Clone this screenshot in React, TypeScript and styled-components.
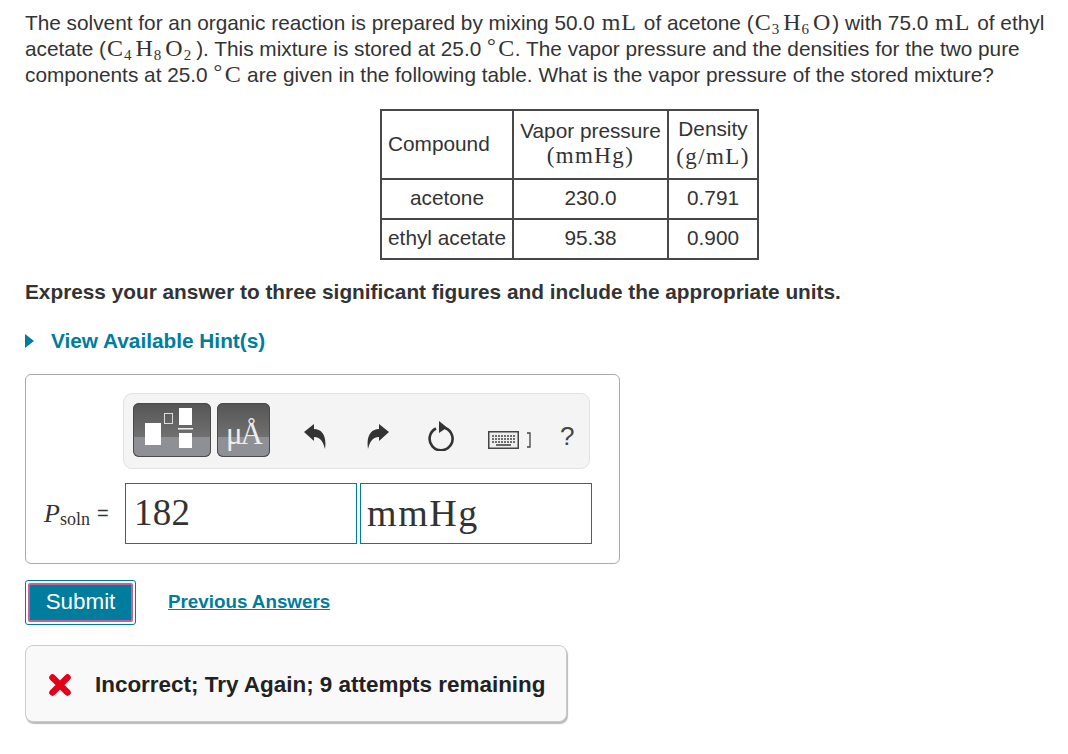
import React from 'react'
import styled, { createGlobalStyle } from 'styled-components'

const GlobalStyle = createGlobalStyle`
  html, body {
    margin: 0;
    padding: 0;
    background: #fff;
  }
  body {
    font-family: "Liberation Sans", Arial, sans-serif;
    color: #333;
  }
`

const App: React.FC = () => {
  return (
    <Page>
      <GlobalStyle />
      <Question>
        The solvent for an organic reaction is prepared by mixing 50.0 <Mt>mL</Mt> of acetone (
        <Mt>C<sub>3</sub>H<sub>6</sub>O</Mt>) with 75.0 <Mt>mL</Mt> of ethyl
        <br />
        acetate (<Mt>C<sub>4</sub>H<sub>8</sub>O<sub>2</sub></Mt>). This mixture is stored at 25.0 <Mt $deg><sup>°</sup>C</Mt>. The vapor pressure and the densities for the two pure
        <br />
        components at 25.0 <Mt $deg><sup>°</sup>C</Mt> are given in the following table. What is the vapor pressure of the stored mixture?
      </Question>

      <TableWrap>
        <DataTable>
          <tbody>
            <HeadRow>
              <Cell $w={132} $left>Compound</Cell>
              <Cell $w={155} $lh={25}>Vapor pressure<br /><TableMt>(mmHg)</TableMt></Cell>
              <Cell $w={90} $lh={28}>Density<br /><TableMt>(g/mL)</TableMt></Cell>
            </HeadRow>
            <BodyRow>
              <Cell>acetone</Cell>
              <Cell>230.0</Cell>
              <Cell>0.791</Cell>
            </BodyRow>
            <BodyRow>
              <Cell>ethyl acetate</Cell>
              <Cell>95.38</Cell>
              <Cell>0.900</Cell>
            </BodyRow>
          </tbody>
        </DataTable>
      </TableWrap>

      <Instruction>Express your answer to three significant figures and include the appropriate units.</Instruction>

      <HintRow>
        <svg width="10" height="16" viewBox="0 0 10 16"><path d="M0 1 L9 8 L0 15 Z" fill="#007c9c" /></svg>
        <HintLink>View Available Hint(s)</HintLink>
      </HintRow>

      <AnswerBox>
        <Toolbar>
          <TemplateButton $w={78}>
            <svg width="78" height="54" viewBox="0 0 78 54">
              <rect x="12" y="20" width="16" height="22" fill="#fff" />
              <rect x="31.5" y="10.5" width="8" height="10" fill="none" stroke="#ddd" strokeWidth="1" />
              <rect x="46" y="5" width="13" height="17" fill="#fff" />
              <rect x="45" y="25" width="15" height="1.5" fill="#eee" />
              <rect x="46" y="30" width="13" height="15" fill="#fff" />
            </svg>
          </TemplateButton>
          <TemplateButton $w={53}>
            <UnitGlyph>μÅ</UnitGlyph>
          </TemplateButton>
          <ToolIcon $gap={28} $drop={12}>
            <svg width="22" height="26" viewBox="0 0 22 26">
              <path d="M0 8 L10 0 L10 5 C18 5 23 12 21 25 C19 17 16 13 10 13 L10 17 Z" fill="#333" />
            </svg>
          </ToolIcon>
          <ToolIcon $gap={41} $drop={12}>
            <svg width="22" height="26" viewBox="0 0 22 26">
              <path d="M22 8 L12 0 L12 5 C4 5 -1 12 1 25 C3 17 6 13 12 13 L12 17 Z" fill="#333" />
            </svg>
          </ToolIcon>
          <ToolIcon $gap={39} $drop={10}>
            <svg width="26" height="30" viewBox="0 0 26 30">
              <path d="M8 7.5 A11.5 11.5 0 1 0 17 7" fill="none" stroke="#333" strokeWidth="2.6" />
              <path d="M11 0 L19 6.5 L11 12 Z" fill="#333" />
            </svg>
          </ToolIcon>
          <ToolIcon $gap={34} $drop={18}>
            <svg width="31" height="18" viewBox="0 0 31 18">
              <rect x="0.75" y="0.75" width="29.5" height="16.5" fill="#eee" stroke="#444" strokeWidth="1.5" />
              <path d="M4 5 H27 M4 8 H27 M4 11 H27" stroke="#444" strokeWidth="1.6" strokeDasharray="2 1" />
              <path d="M8 14 H23" stroke="#444" strokeWidth="1.6" />
            </svg>
          </ToolIcon>
          <ToolIcon $gap={8} $drop={18}>
            <svg width="4" height="16" viewBox="0 0 4 16"><path d="M0 1 H3 V15 H0" fill="none" stroke="#444" strokeWidth="1.3" /></svg>
          </ToolIcon>
          <HelpMark>?</HelpMark>
        </Toolbar>

        <AnswerRow>
          <AnswerLabel><i>P</i><sub>soln</sub></AnswerLabel>
          <Equals>=</Equals>
          <AnswerField>182</AnswerField>
          <AnswerField $units>mmHg</AnswerField>
        </AnswerRow>
      </AnswerBox>

      <ActionRow>
        <SubmitOuter>
          <SubmitButton>Submit</SubmitButton>
        </SubmitOuter>
        <PreviousLink>Previous Answers</PreviousLink>
      </ActionRow>

      <Feedback>
        <svg width="22" height="22" viewBox="0 0 22 22">
          <path d="M3.5 3.5 L18.5 18.5 M18.5 3.5 L3.5 18.5" fill="none" stroke="#e2001a" strokeWidth="6.5" strokeLinecap="round" />
        </svg>
        <FeedbackText>Incorrect; Try Again; 9 attempts remaining</FeedbackText>
      </Feedback>
    </Page>
  )
}

export default App

const Page = styled.div`
  width: 1068px;
  height: 754px;
  box-sizing: border-box;
  padding: 10px 0 0 25px;
  overflow: hidden;
`

const Question = styled.div`
  font-size: 20.8px;
  line-height: 26px;
  color: #333;
  white-space: nowrap;
`

const Mt = styled.span<{ $deg?: boolean }>`
  font-family: "Liberation Serif", "Times New Roman", serif;
  font-size: 24px;
  letter-spacing: ${(p) => (p.$deg ? '0.5px' : '1px')};
  padding: ${(p) => (p.$deg ? '0' : '0 1px')};
  line-height: 0;

  sub {
    font-size: 15px;
    line-height: 0;
    vertical-align: -4px;
    margin-right: 3px;
  }
  sup {
    font-size: 22px;
    line-height: 0;
    vertical-align: 3px;
    margin-right: 2px;
  }
`

const TableMt = styled.span`
  font-family: "Liberation Serif", "Times New Roman", serif;
  font-size: 23px;
  letter-spacing: 1.4px;
`

const TableWrap = styled.div`
  display: flex;
  margin: 21px 0 0 355px;
`

const DataTable = styled.table`
  border-collapse: collapse;
  table-layout: fixed;
  width: 378px;
  font-size: 20.8px;
  color: #333;
`

const HeadRow = styled.tr`
  height: 69px;
`

const BodyRow = styled.tr`
  height: 40px;
`

const Cell = styled.td<{ $w?: number; $left?: boolean; $lh?: number }>`
  border: 2px solid #484848;
  padding: 0 2px ${(p) => (p.$lh ? '4px' : '2px')};
  text-align: ${(p) => (p.$left ? 'left' : 'center')};
  padding-left: ${(p) => (p.$left ? '6px' : '2px')};
  width: ${(p) => (p.$w ? `${p.$w}px` : 'auto')};
  line-height: ${(p) => (p.$lh ? `${p.$lh}px` : 'normal')};
  box-sizing: border-box;
  white-space: nowrap;
`

const Instruction = styled.div`
  margin-top: 19px;
  font-size: 20.8px;
  line-height: 26px;
  font-weight: 700;
  color: #333;
`

const HintRow = styled.div`
  display: flex;
  align-items: center;
  gap: 16px;
  margin-top: 23px;
  height: 26px;
`

const HintLink = styled.span`
  font-size: 20.8px;
  font-weight: 700;
  color: #007c9c;
`

const AnswerBox = styled.div`
  box-sizing: border-box;
  width: 595px;
  height: 190px;
  margin-top: 20px;
  border: 1px solid #aaa;
  border-radius: 6px;
  padding: 18px 0 0 18px;
`

const Toolbar = styled.div`
  box-sizing: border-box;
  display: flex;
  align-items: center;
  width: 467px;
  margin-left: 79px;
  height: 76px;
  padding-left: 9px;
  background: #f4f4f4;
  border: 1px solid #e2e2e2;
  border-radius: 9px;
`

const TemplateButton = styled.div<{ $w: number }>`
  box-sizing: border-box;
  display: flex;
  flex-shrink: 0;
  align-items: center;
  justify-content: center;
  width: ${(p) => p.$w}px;
  height: 54px;
  margin: 0 6px 2px 0;
  border-radius: 6px;
  background: linear-gradient(#555 0%, #707070 63%, #8f8f96 63%, #8f8f96 100%);
  box-shadow: inset 0 0 0 1px #4a4a4a;
  overflow: hidden;
`

const UnitGlyph = styled.span`
  font-family: "Liberation Serif", "Times New Roman", serif;
  font-size: 31px;
  letter-spacing: -2px;
  color: #eee;
  line-height: 1;
  margin-top: 6px;
`

const ToolIcon = styled.div<{ $gap: number; $drop: number }>`
  display: flex;
  flex-shrink: 0;
  align-items: center;
  margin-left: ${(p) => p.$gap}px;
  margin-top: ${(p) => p.$drop}px;
`

const HelpMark = styled.span`
  margin: 10px 0 0 29px;
  font-size: 26px;
  color: #444;
  line-height: 1;
`

const AnswerRow = styled.div`
  display: flex;
  align-items: center;
  margin-top: 14px;
`

const AnswerLabel = styled.span`
  font-family: "Liberation Serif", "Times New Roman", serif;
  font-size: 26px;
  color: #333;
  width: 53px;

  sub {
    font-size: 18px;
    line-height: 0;
    vertical-align: -3px;
  }
`

const Equals = styled.span`
  width: 28px;
  font-size: 20px;
  color: #333;
`

const AnswerField = styled.div<{ $units?: boolean }>`
  box-sizing: border-box;
  width: 232px;
  height: 61px;
  margin-left: ${(p) => (p.$units ? '3px' : '0')};
  padding-left: ${(p) => (p.$units ? '6px' : '8px')};
  border: 1px solid #007c9c;
  font-family: "Liberation Serif", "Times New Roman", serif;
  font-size: ${(p) => (p.$units ? '38px' : '37px')};
  letter-spacing: ${(p) => (p.$units ? '1.6px' : '0.3px')};
  line-height: 58px;
  color: #333;
`

const ActionRow = styled.div`
  display: flex;
  align-items: center;
  margin-top: 16px;
`

const SubmitOuter = styled.div`
  box-sizing: border-box;
  width: 111px;
  height: 45px;
  padding: 2px;
  background: #fff;
  border: 1px solid #007c9c;
  border-radius: 3px;
`

const SubmitButton = styled.div`
  box-sizing: border-box;
  display: flex;
  align-items: center;
  justify-content: center;
  height: 100%;
  background: #007c9c;
  border: 2px solid #c2609b;
  border-radius: 2px;
  color: #fff;
  font-size: 22.4px;
  padding-bottom: 2px;
`

const PreviousLink = styled.span`
  margin: 0 0 2px 32px;
  font-size: 18.8px;
  font-weight: 700;
  color: #007c9c;
  text-decoration: underline;
`

const Feedback = styled.div`
  box-sizing: border-box;
  display: flex;
  align-items: center;
  gap: 24px;
  width: 542px;
  height: 77px;
  margin-top: 20px;
  padding: 3px 0 0 23px;
  background: #f9f9f9;
  border: 1px solid #ccc;
  border-radius: 8px;
  box-shadow: 1px 2px 1px #bbb;
`

const FeedbackText = styled.span`
  font-size: 22.45px;
  font-weight: 700;
  color: #222;
`
